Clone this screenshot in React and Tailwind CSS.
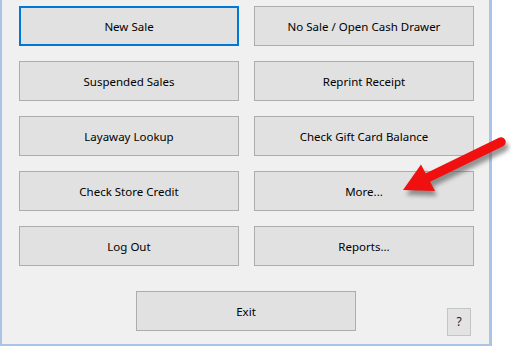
import React from 'react';

const buttons = [
  'New Sale',
  'No Sale / Open Cash Drawer',
  'Suspended Sales',
  'Reprint Receipt',
  'Layaway Lookup',
  'Check Gift Card Balance',
  'Check Store Credit',
  'More...',
  'Log Out',
  'Reports...',
];

function WinButton({ label, focused }) {
  return (
    <button
      type="button"
      className={`h-[40px] w-[220px] bg-[#e1e1e1] text-[11.5px] leading-none text-black flex items-center justify-center pt-[2px] ${
        focused ? 'border-2 border-[#0078d7]' : 'border border-[#adadad]'
      }`}
    >
      {label}
    </button>
  );
}

function RedArrow() {
  return (
    <svg className="absolute left-0 top-0 pointer-events-none" width="511" height="347" viewBox="0 0 511 347">
      <defs>
        <filter id="shadow" x="-20%" y="-20%" width="140%" height="160%">
          <feGaussianBlur stdDeviation="2" />
        </filter>
      </defs>
      <g transform="translate(3,5)" filter="url(#shadow)" fill="#555" opacity="0.6">
        <line x1="501" y1="142" x2="427" y2="178" stroke="#555" strokeWidth="9.5" strokeLinecap="round" />
        <polygon points="403,190 422,165 434,191" />
      </g>
      <line x1="501" y1="142" x2="426" y2="178.5" stroke="#f01010" strokeWidth="9.5" strokeLinecap="round" />
      <polygon points="403,190 421,164.5 435,191" fill="#f01010" />
    </svg>
  );
}

export default function App() {
  return (
    <div
      className="relative w-[511px] h-[347px] bg-white overflow-hidden"
      style={{ fontFamily: '"Segoe UI", "Noto Sans", "Open Sans", sans-serif' }}
    >
      <div className="w-[492px] h-[346px] bg-[#f0f0f0] border-l-2 border-b-2 border-r-[3px] border-[#aac4e6] flex flex-col">
        <div className="grid grid-cols-[220px_220px] gap-x-[15px] gap-y-[15px] pl-[17px] pt-[6px]">
          {buttons.map((label, i) => (
            <WinButton key={label} label={label} focused={i === 0} />
          ))}
        </div>
        <div className="flex mt-[25px]">
          <div className="w-[134px]" />
          <WinButton label="Exit" />
          <div className="flex-1 flex justify-end pr-[18px]">
            <button
              type="button"
              className="mt-[17px] w-[24px] h-[28px] bg-[#e3e3e3] border border-[#c4c4c4] text-[12px] text-[#222] flex items-center justify-center"
            >
              ?
            </button>
          </div>
        </div>
      </div>
      <RedArrow />
    </div>
  );
}
